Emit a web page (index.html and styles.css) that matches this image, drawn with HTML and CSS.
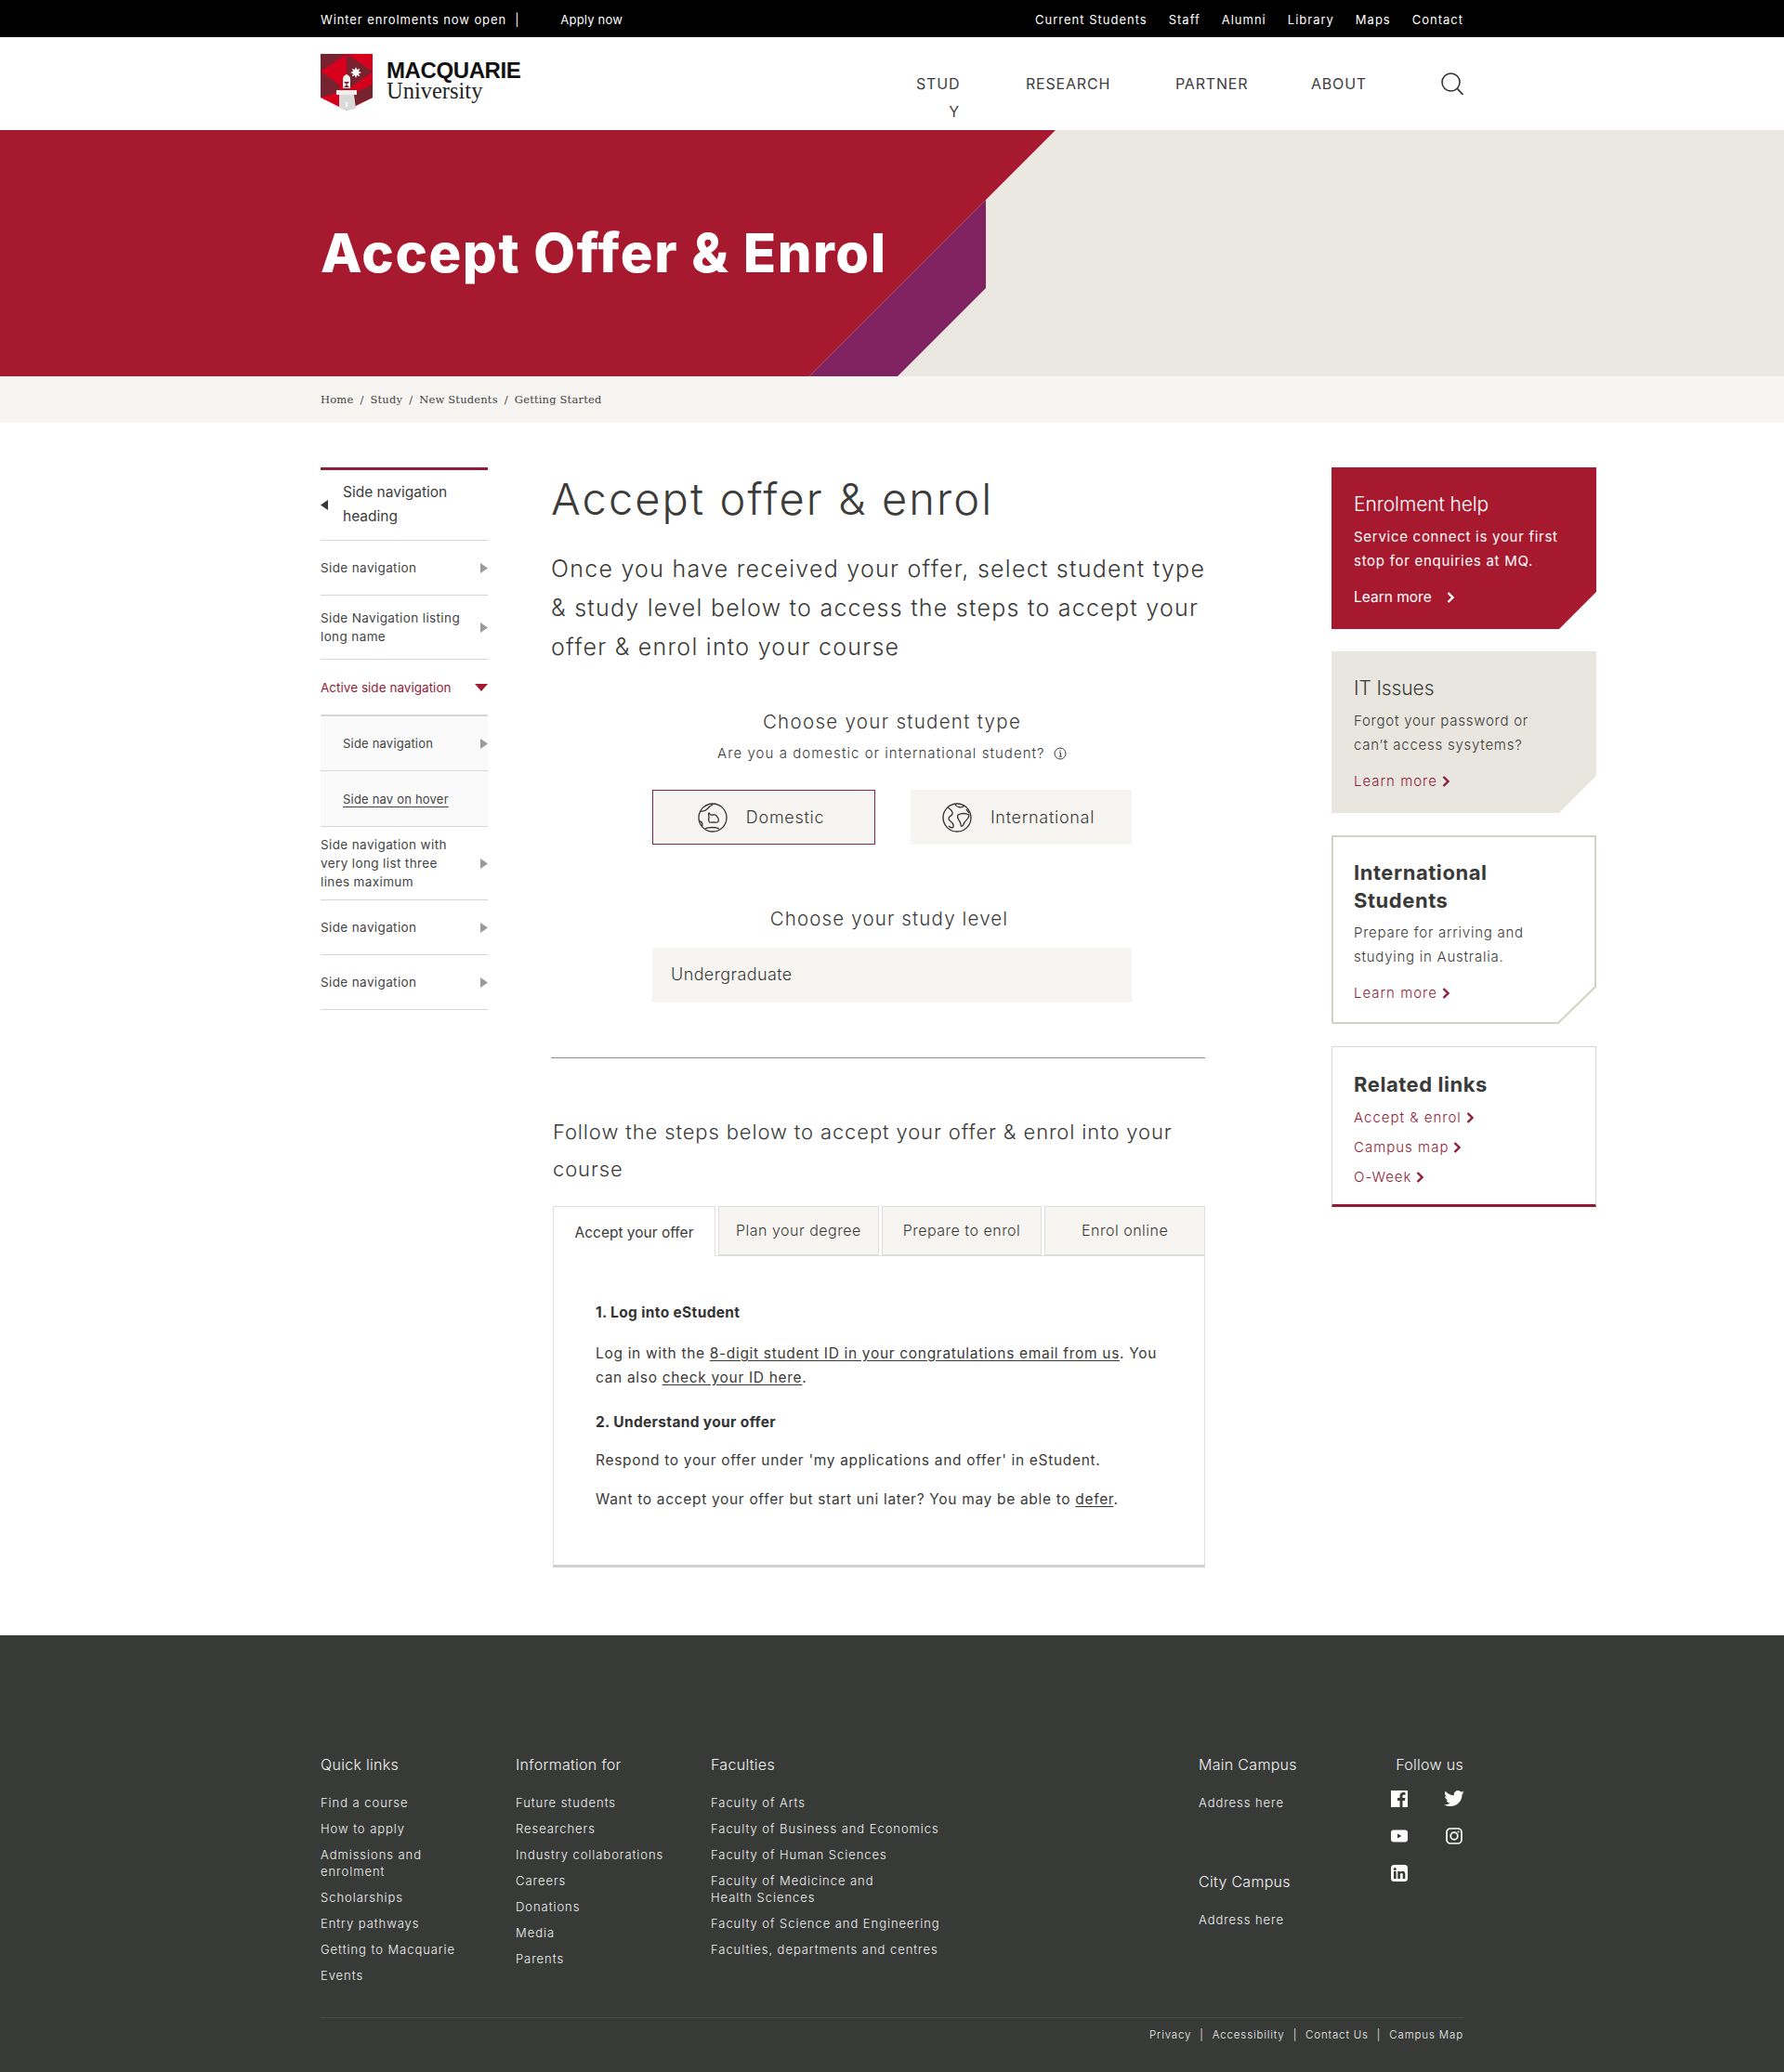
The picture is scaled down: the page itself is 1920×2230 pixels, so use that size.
FILE: index.html
```html
<!DOCTYPE html>
<html lang="en">
<head>
<meta charset="utf-8">
<title>Accept Offer &amp; Enrol</title>
<link rel="stylesheet" href="styles.css">
</head>
<body>
<svg class="defs" width="0" height="0" aria-hidden="true"><defs>
<symbol id="chev" viewBox="0 0 8 12"><path d="M1.500 1 6.500 6 1.500 11" fill="none" stroke="currentColor" stroke-width="2.400"/></symbol>
<symbol id="tri" viewBox="0 0 8 11"><path d="M0 0 8 5.500 0 11Z" fill="currentColor"/></symbol>
</defs></svg>
<div class="topbar"><div class="wrap topbar-in">
  <div class="top-left"><span>Winter enrolments now open &nbsp;|</span><a class="apply">Apply now</a></div>
  <nav class="top-right"><a>Current Students</a><a>Staff</a><a>Alumni</a><a>Library</a><a>Maps</a><a>Contact</a></nav>
</div></div>
<header class="wrap head">
  <a class="logo">
    <svg class="shield" viewBox="0 0 56 61" width="56" height="61">
      <path d="M0 0H56V47L28 61 0 47Z" fill="#d6001c"/>
      <path d="M0 0H28L0 19Z" fill="#76232f"/>
      <path d="M28 0 56 19 28 39Z" fill="#76232f"/>
      <path d="M0 19 20 33 20 41 0 47Z" fill="#76232f"/>
      <path d="M56 33V47L36 56V42Z" fill="#76232f"/>
      <path d="M38 14l1.200 3 3-1.200-1.200 3 3 1.200-3 1.200 1.200 3-3-1.200-1.200 3-1.200-3-3 1.200 1.200-3-3-1.200 3-1.200-1.200-3 3 1.200z" fill="#fff"/>
      <path d="M28 22c-3 1-4 3-4 5v10h8V27c0-2-1-4-4-5z" fill="#f4f0ee"/>
      <path d="M25 30h6l-3 3 3 3h-6l3-3z" fill="#76232f"/>
      <path d="M17 39h22v5H17z" fill="#f1efee"/>
      <path d="M20 44h16l2 15-10 2-8-3z" fill="#d9d9d9"/>
      <path d="M27 52h2v5h-2z" fill="#fff"/>
    </svg>
    <span class="logo-text"><b>MACQUARIE</b><i>University</i></span>
  </a>
  <nav class="mainnav">
    <a class="stud">STUD<br>Y</a><a>RESEARCH</a><a>PARTNER</a><a>ABOUT</a>
    <svg class="search" viewBox="0 0 24 24" width="24" height="24"><circle cx="10.500" cy="10.500" r="9.500" fill="none" stroke="#333" stroke-width="1.600"/><path d="M17.500 17.500 23.500 24" stroke="#333" stroke-width="1.800" fill="none"/></svg>
  </nav>
</header>
<section class="hero">
  <svg class="hero-art" viewBox="0 0 1920 265" preserveAspectRatio="none" aria-hidden="true">
    <path d="M0 0H1136L871 265H0Z" fill="#a6192e"/>
    <path d="M1061 75V170L966 265H871Z" fill="#80225f"/>
  </svg>
  <div class="wrap hero-in"><h1>Accept Offer &amp; Enrol</h1></div>
</section>
<div class="crumbs"><div class="wrap crumbs-in"><a>Home</a><span>/</span><a>Study</a><span>/</span><a>New Students</a><span>/</span><a>Getting Started</a></div></div>
<main class="layout">
  <aside class="sidenav">
    <a class="sn-head"><svg class="sn-back"><use href="#tri"/></svg>Side navigation heading</a>
    <a class="sn r59"><span>Side navigation</span><svg class="ar"><use href="#tri"/></svg></a>
    <a class="sn r69"><span>Side Navigation listing long name</span><svg class="ar"><use href="#tri"/></svg></a>
    <a class="sn r61 active"><span>Active side navigation</span><svg class="ar-d" viewBox="0 0 14 8"><path d="M0 0H14L7 8Z" fill="currentColor"/></svg></a>
    <a class="sn r59 sub"><span>Side navigation</span><svg class="ar"><use href="#tri"/></svg></a>
    <a class="sn r60 sub hover"><span>Side nav on hover</span></a>
    <a class="sn r79"><span>Side navigation with very long list three lines maximum</span><svg class="ar"><use href="#tri"/></svg></a>
    <a class="sn r59"><span>Side navigation</span><svg class="ar"><use href="#tri"/></svg></a>
    <a class="sn r59"><span>Side navigation</span><svg class="ar"><use href="#tri"/></svg></a>
  </aside>
  <article class="content">
    <h2 class="title">Accept offer &amp; enrol</h2>
    <p class="lead">Once you have received your offer, select student type &amp; study level below to access the steps to accept your offer &amp; enrol into your course</p>
    <div class="chooser">
      <h3 class="ch-title">Choose your student type</h3>
      <p class="ch-sub">Are you a domestic or international student?
        <svg class="info" viewBox="0 0 14 14" width="14" height="14"><circle cx="7" cy="7" r="6" fill="none" stroke="#3a3a3a"/><path d="M6 6h1.400v4M5.800 10.200h3M7 3.400v1.400" fill="none" stroke="#3a3a3a"/></svg></p>
      <div class="types">
        <button class="type selected">
          <svg class="globe" viewBox="0 0 32 32" width="32" height="32"><g fill="none" stroke="#333" stroke-width="1.300"><circle cx="16" cy="16" r="15"/><path d="M3 9c4 1 6-1 8-3 1-2 3-3 5-4M2 20c2 0 3 2 3 5M8 28c3-2 12-2 15 0M12 11c1 1 2 3 4 2 2 0 3-1 4 1 2 2 3 4 2 6s-3 1-5 1-4 1-5-1 0-3 0-5-1-3 0-4z"/></g></svg>
          Domestic</button>
        <button class="type">
          <svg class="globe" viewBox="0 0 32 32" width="32" height="32"><g fill="none" stroke="#333" stroke-width="1.300"><circle cx="16" cy="16" r="15"/><path d="M6 5c3 2 6 4 5 7s-4 2-4 5 4 3 5 7-3 3-5 1M14 2c2 3 7 4 10 1M17 13c4-2 8-2 12 0 0 5-5 6-6 10-1 3-3 3-3 0s-5-6-3-10zM26 7l3 4"/></g></svg>
          International</button>
      </div>
      <h3 class="ch-title level">Choose your study level</h3>
      <div class="select">Undergraduate</div>
    </div>
    <hr class="rule">
    <p class="follow">Follow the steps below to accept your offer &amp; enrol into your course</p>
    <div class="tabs">
      <a class="tab on">Accept your offer</a><a class="tab">Plan your degree</a><a class="tab">Prepare to enrol</a><a class="tab">Enrol online</a>
    </div>
    <div class="panel">
      <h4>1. Log into eStudent</h4>
      <p class="p1">Log in with the <u>8-digit student ID in your congratulations email from us</u>. You can also <u>check your ID here</u>.</p>
      <h4 class="h2nd">2. Understand your offer</h4>
      <p class="p2">Respond to your offer under 'my applications and offer' in eStudent.</p>
      <p class="p2">Want to accept your offer but start uni later? You may be able to <u>defer</u>.</p>
    </div>
  </article>
  <aside class="cards">
    <section class="card c-red">
      <h3>Enrolment help</h3>
      <p>Service connect is your first stop for enquiries at MQ.</p>
      <a class="more">Learn more<svg class="chev"><use href="#chev"/></svg></a>
    </section>
    <section class="card c-sand">
      <h3>IT Issues</h3>
      <p>Forgot your password or can’t access sysytems?</p>
      <a class="more">Learn more<svg class="chev"><use href="#chev"/></svg></a>
    </section>
    <section class="card c-line">
      <svg class="c-line-art" viewBox="0 0 285 203" width="285" height="203" aria-hidden="true"><path d="M1 1H284V163L244 202H1Z" fill="#fff" stroke="#d3d2c5" stroke-width="2"/></svg>
      <h3 class="bold">International Students</h3>
      <p>Prepare for arriving and studying in Australia.</p>
      <a class="more">Learn more<svg class="chev"><use href="#chev"/></svg></a>
    </section>
    <section class="card c-links">
      <h3 class="bold">Related links</h3>
      <a class="more">Accept &amp; enrol<svg class="chev"><use href="#chev"/></svg></a>
      <a class="more">Campus map<svg class="chev"><use href="#chev"/></svg></a>
      <a class="more">O-Week<svg class="chev"><use href="#chev"/></svg></a>
    </section>
  </aside>
</main>
<footer class="foot"><div class="wrap">
  <div class="foot-cols">
    <div class="fc fc1"><h5>Quick links</h5><a>Find a course</a><a>How to apply</a><a>Admissions and enrolment</a><a>Scholarships</a><a>Entry pathways</a><a>Getting to Macquarie</a><a>Events</a></div>
    <div class="fc fc2"><h5>Information for</h5><a>Future students</a><a>Researchers</a><a>Industry collaborations</a><a>Careers</a><a>Donations</a><a>Media</a><a>Parents</a></div>
    <div class="fc fc3"><h5>Faculties</h5><a>Faculty of Arts</a><a>Faculty of Business and Economics</a><a>Faculty of Human Sciences</a><a>Faculty of Medicince and<br>Health Sciences</a><a>Faculty of Science and Engineering</a><a>Faculties, departments and centres</a></div>
    <div class="fc fc4"><h5>Main Campus</h5><a class="addr">Address here</a><h5>City Campus</h5><a>Address here</a></div>
    <div class="fc fc5"><h5>Follow us</h5>
      <div class="social">
        <svg viewBox="0 0 18 18" width="18" height="18"><path d="M0 0H18V18H12.500V11H15L15.400 8H12.500V6.200C12.500 5.300 12.800 4.800 14 4.800H15.500V2.200C15 2.100 14.200 2 13.200 2 11 2 9.500 3.300 9.500 5.800V8H7V11H9.500V18H0Z" fill="#fff"/></svg>
        <svg class="tw" viewBox="0 0 24 20" width="22" height="18"><path d="M24 2.400a9.800 9.800 0 0 1-2.800.8 4.900 4.900 0 0 0 2.100-2.700 9.800 9.800 0 0 1-3.100 1.200A4.900 4.900 0 0 0 11.800 6 13.900 13.900 0 0 1 1.700.9a4.900 4.900 0 0 0 1.500 6.500 4.900 4.900 0 0 1-2.200-.6 4.900 4.900 0 0 0 3.900 4.800 4.900 4.900 0 0 1-2.200.1 4.900 4.900 0 0 0 4.600 3.400A9.900 9.900 0 0 1 0 16.900 13.900 13.900 0 0 0 7.500 19c9.100 0 14.300-7.700 14-14.600A10 10 0 0 0 24 2.400z" fill="#fff"/></svg>
        <svg viewBox="0 0 18 18" width="18" height="18"><path d="M3 2.500H15Q18 2.500 18 5.500V12.500Q18 15.500 15 15.500H3Q0 15.500 0 12.500V5.500Q0 2.500 3 2.500Z" fill="#fff"/><path d="M7 6.500 11.500 9 7 11.500Z" fill="#383a38"/></svg>
        <svg class="ig" viewBox="0 0 18 18" width="18" height="18"><rect x="1" y="1" width="16" height="16" rx="4" fill="none" stroke="#fff" stroke-width="1.700"/><circle cx="9" cy="9" r="3.800" fill="none" stroke="#fff" stroke-width="1.700"/><circle cx="13.600" cy="4.400" r="1" fill="#fff"/></svg>
        <svg viewBox="0 0 18 18" width="18" height="18"><rect width="18" height="18" rx="3.500" fill="#fff"/><path d="M3 7H5.600V15H3ZM4.300 3A1.500 1.500 0 1 1 4.300 6 1.500 1.500 0 0 1 4.300 3ZM7.300 7H9.800V8.100C10.300 7.300 11.200 6.800 12.400 6.800 14.500 6.800 15.300 8.100 15.300 10.300V15H12.700V10.800C12.700 9.800 12.400 9.100 11.500 9.100 10.500 9.100 9.900 9.800 9.900 10.900V15H7.300Z" fill="#383a38"/></svg>
      </div>
    </div>
  </div>
  <div class="foot-bottom"><a>Privacy</a><span>|</span><a>Accessibility</a><span>|</span><a>Contact Us</a><span>|</span><a>Campus Map</a></div>
</div></footer>
</body>
</html>
```

FILE: styles.css
```css
* { box-sizing: border-box; }
html, body { margin: 0; padding: 0; }
body { font-family: Inter, "Open Sans", sans-serif; color: #3a3a38; background: #fff; width: 1920px; overflow-x: hidden; }
.defs { position: absolute; }
p, h1, h2, h3, h4, h5 { margin: 0; font-weight: 400; }
.wrap { width: 1230px; margin: 0 auto; }

.topbar { background: #000; color: #fff; height: 40px; font-size: 13px; letter-spacing: .9px; }
.topbar-in { display: flex; justify-content: space-between; align-items: center; height: 40px; padding-top: 2px; }
.top-left { display: flex; }
.apply { margin-left: 44px; letter-spacing: .2px; }
.top-right { display: flex; gap: 23px; letter-spacing: 1px; }

.head { height: 100px; display: flex; justify-content: space-between; position: relative; }
.logo { display: flex; padding-top: 18px; gap: 15px; }
.logo-text { display: flex; flex-direction: column; }
.logo-text b { font: 700 24px/28px "Liberation Sans", Arial, sans-serif; color: #111; margin-top: 4px; letter-spacing: -.4px; }
.logo-text i { font: 400 24.500px/20px "Liberation Serif", serif; color: #222; margin-top: -2px; }
.mainnav { display: grid; grid-template-columns: 118px 161px 146px 140px 24px; align-items: start; padding-top: 35px; font-size: 16px; letter-spacing: .8px; line-height: 30px; color: #3d3d3d; position: relative; height: 100px; }
.stud { width: 47px; text-align: right; }
.search { margin-top: 3px; }

.hero { height: 265px; background: #ebe7e1; position: relative; }
.hero-art { position: absolute; inset: 0; width: 100%; height: 100%; }
.hero-in { position: relative; display: flex; align-items: center; height: 263px; }
.hero h1 { font-size: 58px; font-weight: 800; color: #fff; letter-spacing: 1.550px; }

.crumbs { height: 50px; background: #f6f5f1; font-family: "DejaVu Serif", "Liberation Serif", serif; color: #444; }
.crumbs-in { display: flex; align-items: center; height: 50px; gap: 7px; font-size: 11.500px; letter-spacing: .18px; }

.layout { display: grid; grid-template-columns: 180px 772px 421px; width: 1373px; margin-left: 345px; padding-top: 48px; height: 1305px; }
.content { margin-left: 68px; width: 704px; }

.sidenav { display: flex; flex-direction: column; font-size: 13.500px; letter-spacing: .38px; line-height: 20px; color: #444; }
.sn-head { position: relative; display: block; height: 79px; border-top: 3px solid #8f1d37; border-bottom: 1px solid #d6d6d6; padding: 11px 0 0 24px; font-size: 15.500px; line-height: 26px; letter-spacing: 0; color: #3d3d3d; }
.sn-back { position: absolute; left: 0; top: 32px; width: 8px; height: 11px; transform: scaleX(-1); color: #383838; }
.sn { display: flex; align-items: center; justify-content: space-between; border-bottom: 1px solid #d6d6d6; }
.sn span { max-width: 160px; }
.ar { width: 8px; height: 11px; color: #9b9b9b; flex: none; }
.ar-d { width: 14px; height: 8px; color: #a6192e; flex: none; }
.r59 { height: 59px; } .r60 { height: 60px; } .r61 { height: 61px; } .r69 { height: 69px; } .r79 { height: 79px; }
.active { color: #8f1d37; border-bottom: 2px solid #d6d6d6; letter-spacing: .03px; }
.sub { background: #fafafa; padding-left: 24px; font-size: 13px; letter-spacing: .2px; }
.hover span { text-decoration: underline; text-underline-offset: 3px; }

.title { font-size: 47px; font-weight: 300; line-height: 60px; letter-spacing: 2.100px; margin-top: 4px; color: #3c3c3a; }
.lead { font-size: 25px; font-weight: 300; line-height: 42px; margin-top: 24px; letter-spacing: 1.250px; margin-right: -4px; }
.chooser { margin-left: 109px; width: 516px; margin-top: 44px; text-align: center; }
.ch-title { font-size: 20.500px; line-height: 32px; letter-spacing: 1.300px; font-weight: 300; white-space: nowrap; }
.ch-sub { font-size: 15px; margin-top: 6px; height: 24px; line-height: 24px; letter-spacing: 1.050px; font-weight: 300; white-space: nowrap; }
.info { vertical-align: -2px; margin-left: 4px; }
.types { display: flex; justify-content: space-between; margin-top: 27px; }
.type { width: 240px; height: 59px; background: #f6f5f1; border: 0; font: 300 18px Inter, sans-serif; letter-spacing: .7px; color: #3a3a38; display: flex; align-items: center; justify-content: center; gap: 20px; padding: 0 6px 0 0; }
.selected { border: 1px solid #7d2750; }
.type:not(.selected) { width: 238px; }
.level { margin-top: 64px; padding-right: 6px; letter-spacing: 1.150px; }
.select { margin-top: 15px; height: 59px; background: #f6f5f1; text-align: left; padding-left: 20px; line-height: 57px; font-size: 18px; letter-spacing: .4px; font-weight: 300; }
.rule { border: 0; border-top: 1px solid #8d8d8d; margin: 59px 0 0; }
.follow { margin: 59px 0 0 2px; font-size: 22px; line-height: 40px; font-weight: 300; letter-spacing: .87px; width: 700px; }

.tabs { display: flex; gap: 3px; margin: 20px 0 0 2px; height: 53px; font-size: 16px; letter-spacing: .5px; font-weight: 300; }
.tab { flex: 1 1 0; background: #f6f5f1; border: 1px solid #dedede; text-align: center; line-height: 50px; white-space: nowrap; }
.tab.on { background: #fff; border-bottom: 0; line-height: 56px; flex: 0 0 175px; position: relative; height: 54px; letter-spacing: 0; z-index: 1; font-size: 15.500px; font-weight: 400; }
.panel { margin-left: 2px; height: 336px; border: 1px solid #dedede; border-bottom: 3px solid #d0d0d0; padding: 49px 45px 0; font-size: 15.500px; line-height: 26px; font-weight: 300; letter-spacing: .68px; }
.panel u { text-underline-offset: 2px; }
.panel h4 { font-size: 15.500px; font-weight: 700; line-height: 24px; color: #333; letter-spacing: .35px; }
.p1 { margin-top: 19px; }
.h2nd { margin-top: 23px; }
.p2 { margin-top: 16px; }

.cards { display: flex; flex-direction: column; gap: 24px; width: 285px; margin-left: 136px; }
.card { position: relative; height: 174px; padding: 25px 24px 0; }
.c-red, .c-sand { clip-path: polygon(0 0, 100% 0, 100% calc(100% - 40px), calc(100% - 40px) 100%, 0 100%); }
.c-red { background: #a6192e; color: #fff; }
.c-sand { background: #e9e6e0; }
.card h3 { font-size: 21px; line-height: 30px; letter-spacing: -.1px; font-weight: 300; position: relative; }
.card p { font-size: 15px; line-height: 26px; margin-top: 7px; position: relative; font-weight: 300; letter-spacing: .75px; max-width: 226px; }
.c-red p { font-weight: 400; letter-spacing: .72px; }
.card h3.bold { font-size: 22px; font-weight: 700; letter-spacing: .55px; max-width: 200px; }
.more { display: flex; align-items: center; font-size: 15px; line-height: 26px; color: #8f1d37; letter-spacing: 1px; position: relative; gap: 5px; margin-top: 13px; font-weight: 300; }
.chev { width: 8px; height: 12px; color: #8f1d37; }
.c-red .more { color: #fff; letter-spacing: 0; font-size: 15.500px; font-weight: 400; gap: 16px; }
.c-red .chev { color: #fff; }
.c-line { height: 203px; padding-top: 25px; }
.c-line-art { position: absolute; left: 0; top: 0; }
.c-links { height: 173px; border: 1px solid #d6d6d6; border-bottom: 3px solid #8f1d37; padding: 25px 23px 0; }
.c-links .more { margin-top: 6px; }
.c-links h3 + .more { margin-top: 8px; }

.foot { background: #383a38; height: 470px; color: #fff; padding-top: 126px; }
.foot-cols { display: flex; height: 285px; }
.fc { display: flex; flex-direction: column; font-size: 13px; letter-spacing: .95px; line-height: 18px; font-weight: 300; color: #f2f2f2; }
.fc h5 { font-size: 16px; line-height: 26px; letter-spacing: .3px; margin-bottom: 19px; font-weight: 300; }
.fc a { margin-bottom: 10px; }
.fc1 { width: 210px; } .fc1 a { max-width: 165px; } .fc2 { width: 210px; } .fc3 { width: 525px; }
.fc4 { width: 213px; }
.fc4 .addr { margin-bottom: 63px; }
.fc5 { width: 72px; align-items: flex-end; white-space: nowrap; }
.social { display: grid; grid-template-columns: 18px 18px; column-gap: 41px; row-gap: 22px; margin-top: -4px; width: 78px; justify-content: start; align-items: start; }
.social .tw { margin-left: -2px; }
.foot-bottom { border-top: 1px solid #4a4c4a; display: flex; justify-content: flex-end; gap: 9px; font-size: 11.500px; letter-spacing: .85px; line-height: 36px; font-weight: 300; color: #eee; }
```
